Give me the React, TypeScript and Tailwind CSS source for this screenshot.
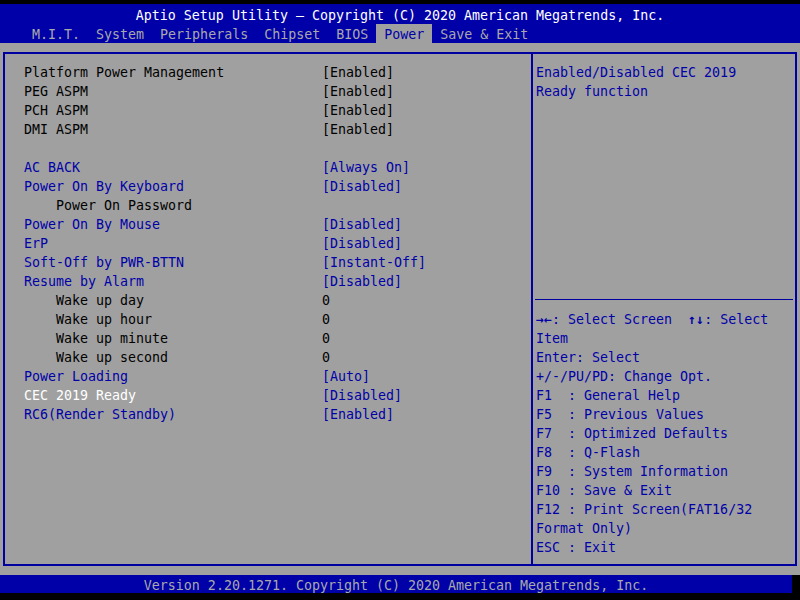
type Row = { label: string; value?: string; kind?: 'info' | 'opt' | 'sel'; indent?: boolean } | null

const rows: Row[] = [
  { label: 'Platform Power Management', value: '[Enabled]', kind: 'info' },
  { label: 'PEG ASPM', value: '[Enabled]', kind: 'info' },
  { label: 'PCH ASPM', value: '[Enabled]', kind: 'info' },
  { label: 'DMI ASPM', value: '[Enabled]', kind: 'info' },
  null,
  { label: 'AC BACK', value: '[Always On]', kind: 'opt' },
  { label: 'Power On By Keyboard', value: '[Disabled]', kind: 'opt' },
  { label: 'Power On Password', kind: 'info', indent: true },
  { label: 'Power On By Mouse', value: '[Disabled]', kind: 'opt' },
  { label: 'ErP', value: '[Disabled]', kind: 'opt' },
  { label: 'Soft-Off by PWR-BTTN', value: '[Instant-Off]', kind: 'opt' },
  { label: 'Resume by Alarm', value: '[Disabled]', kind: 'opt' },
  { label: 'Wake up day', value: '0', kind: 'info', indent: true },
  { label: 'Wake up hour', value: '0', kind: 'info', indent: true },
  { label: 'Wake up minute', value: '0', kind: 'info', indent: true },
  { label: 'Wake up second', value: '0', kind: 'info', indent: true },
  { label: 'Power Loading', value: '[Auto]', kind: 'opt' },
  { label: 'CEC 2019 Ready', value: '[Disabled]', kind: 'sel' },
  { label: 'RC6(Render Standby)', value: '[Enabled]', kind: 'opt' },
]

const tabs = ['M.I.T.', 'System', 'Peripherals', 'Chipset', 'BIOS', 'Power', 'Save & Exit']

const keys = [
  'Enter: Select',
  '+/-/PU/PD: Change Opt.',
  'F1  : General Help',
  'F5  : Previous Values',
  'F7  : Optimized Defaults',
  'F8  : Q-Flash',
  'F9  : System Information',
  'F10 : Save & Exit',
  'F12 : Print Screen(FAT16/32',
  'Format Only)',
  'ESC : Exit',
]

export default function App() {
  return (
    <div className="w-[800px] h-[600px] bg-black flex flex-col font-['DejaVu_Sans_Mono','Liberation_Mono',monospace] text-[13.3px] leading-[19px] overflow-hidden">
      {/* header */}
      <div className="mt-[4px] h-[39px] bg-[#0000a8] flex flex-col">
        <div className="h-[20px] pt-[2px] leading-[20px] text-center text-white whitespace-pre">
          Aptio Setup Utility – Copyright (C) 2020 American Megatrends, Inc.
        </div>
        <div className="h-[19px] flex pl-[24px] text-[#a8a8a8]">
          {tabs.map((t) => (
            <div
              key={t}
              className={
                t === 'Power'
                  ? 'px-[8px] h-[19px] pt-[1px] leading-[19px] bg-[#a0a0a0] text-[#0000a8] whitespace-pre'
                  : 'px-[8px] h-[19px] pt-[1px] leading-[19px] whitespace-pre'
              }
            >
              {t}
            </div>
          ))}
        </div>
      </div>

      {/* main */}
      <div className="h-[532px] bg-[#a0a0a0] pt-[9px] px-[3px]">
        <div className="h-[514px] border-2 border-[#0000a0] flex">
          <div className="w-[528px] border-r-2 border-[#0000a0] pt-[9px] pl-[19px]">
            {rows.map((r, i) =>
              r === null ? (
                <div key={i} className="h-[19px]" />
              ) : (
                <div key={i} className="h-[19px] flex whitespace-pre">
                  <div
                    className={
                      'w-[298px] ' +
                      (r.indent ? 'pl-[32px] ' : '') +
                      (r.kind === 'opt' ? 'text-[#0000a8]' : r.kind === 'sel' ? 'text-white' : 'text-black')
                    }
                  >
                    {r.label}
                  </div>
                  <div className={r.kind === 'info' ? 'text-black' : 'text-[#0000a8]'}>{r.value}</div>
                </div>
              ),
            )}
          </div>
          <div className="flex-1 flex flex-col text-[#0000a8]">
            <div className="h-[245px] pt-[9px] pl-[3px]">
              <div>Enabled/Disabled CEC 2019</div>
              <div>Ready function</div>
            </div>
            <div className="mx-[2px] border-t border-[#0000a0]" />
            <div className="pt-[10px] pl-[3px] whitespace-pre">
              <div>
                <span className="font-bold">→←</span>: Select Screen  <span className="font-bold">↑↓</span>: Select
              </div>
              <div>Item</div>
              {keys.map((k) => (
                <div key={k}>{k}</div>
              ))}
            </div>
          </div>
        </div>
      </div>

      {/* footer */}
      <div className="w-[792px] h-[18px] pt-[1px] leading-[19px] bg-[#0000a8] text-[#a8a8a8] text-center whitespace-pre overflow-hidden">
        Version 2.20.1271. Copyright (C) 2020 American Megatrends, Inc.
      </div>
    </div>
  )
}
